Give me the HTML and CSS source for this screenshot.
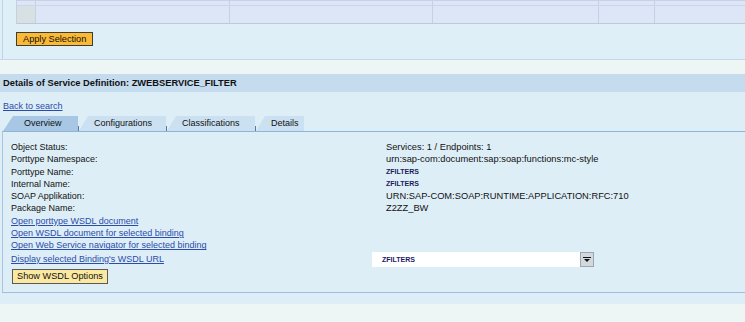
FILE: index.html
```html
<!DOCTYPE html>
<html lang="en">
<head>
    <meta charset="UTF-8">
    <meta name="viewport" content="width=device-width, initial-scale=1.0">
    <title>Details of Service Definition</title>
    <link rel="stylesheet" href="styles.css">
</head>
<body>
    <div id="selection-area">
        <div class="selection-inner">
            <div class="sel-table">
                <div class="sel-line sel-head">
                    <div class="sel-cell c1"></div>
                    <div class="sel-cell c2"></div>
                    <div class="sel-cell c3"></div>
                    <div class="sel-cell c4"></div>
                    <div class="sel-cell c5"></div>
                    <div class="sel-cell c6"></div>
                </div>
                <div class="sel-line sel-row">
                    <div class="sel-cell c1 marker"></div>
                    <div class="sel-cell c2"></div>
                    <div class="sel-cell c3"></div>
                    <div class="sel-cell c4"></div>
                    <div class="sel-cell c5"></div>
                    <div class="sel-cell c6"></div>
                </div>
            </div>
            <button id="apply-button" class="sap-button">Apply Selection</button>
        </div>
    </div>

    <div class="spacer"></div>

    <div id="details-area">
        <div class="details-title">Details of Service Definition: ZWEBSERVICE_FILTER</div>
        <a class="back-link" href="#">Back to search</a>

        <div class="tabs">
            <div class="tab tab-overview selected">Overview</div>
            <div class="tab tab-config">Configurations</div>
            <div class="tab tab-class">Classifications</div>
            <div class="tab tab-details">Details</div>
        </div>

        <div class="tab-panel">
            <div class="props">
                <div class="label">Object Status:</div>
                <div class="value">Services: 1 / Endpoints: 1</div>

                <div class="label">Porttype Namespace:</div>
                <div class="value">urn:sap-com:document:sap:soap:functions:mc-style</div>

                <div class="label">Porttype Name:</div>
                <div class="value small">ZFILTERS</div>

                <div class="label">Internal Name:</div>
                <div class="value small">ZFILTERS</div>

                <div class="label">SOAP Applikation:</div>
                <div class="value">URN:SAP-COM:SOAP:RUNTIME:APPLICATION:RFC:710</div>

                <div class="label">Package Name:</div>
                <div class="value">Z2ZZ_BW</div>

                <div class="label wide"><a href="#">Open porttype WSDL document</a></div>
                <div class="label wide"><a href="#">Open WSDL document for selected binding</a></div>
                <div class="label wide"><a href="#">Open Web Service navigator for selected binding</a></div>

                <div class="label drop-row"><a href="#">Display selected Binding's WSDL URL</a></div>
                <div class="drop-row">
                    <div class="dropdown">
                        <span class="dropdown-text">ZFILTERS</span>
                        <span class="dropdown-button">
                            <svg width="8" height="5" viewBox="0 0 8 5"><rect x="0" y="0" width="8" height="1" fill="#111"/><path d="M1 2 H7 L4 5 Z" fill="#111"/></svg>
                        </span>
                    </div>
                </div>
            </div>
            <button id="wsdl-button" class="sap-button">Show WSDL Options</button>
        </div>
    </div>
</body>
</html>
```

FILE: styles.css
```css
body {
    font-family: "Liberation Sans", Arial, sans-serif;
    font-size: 9px;
    color: #111111;
    background-color: #edf5f5;
    margin: 0;
    padding: 0;
    overflow: hidden;
}

a {
    color: #2a4cab;
    text-decoration: underline;
}

/* top selection block */
#selection-area {
    background-color: #deeff7;
    padding-left: 2px;
    border-bottom: 1px solid #c6d8e8;
}

.selection-inner {
    height: 59px;
    border-left: 1px solid #bcd4e9;
    padding-left: 13px;
    box-sizing: border-box;
}

.sel-table {
    background-color: #dde6f7;
    border-top: 1px solid #c9d1e6;
    border-bottom: 1px solid #bdc9d9;
    border-left: 1px solid #c6cfe0;
}

.sel-line {
    display: flex;
}

.sel-head {
    height: 4px;
    border-bottom: 1px solid #ccd3ea;
}

.sel-row {
    height: 17px;
}

.sel-cell {
    border-right: 1px solid #c8cfe2;
    box-sizing: border-box;
    flex-shrink: 0;
}

.c1 { width: 19px; }
.c2 { width: 194px; }
.c3 { width: 203px; }
.c4 { width: 166px; }
.c5 { width: 56px; }
.c6 { flex: 1; border-right: none; }

.sel-cell.marker {
    background-color: #d7e0e2;
}

.sap-button {
    font-family: "Liberation Sans", Arial, sans-serif;
    font-size: 9.2px;
    color: #111111;
    border: 1px solid #3c3c3c;
    border-radius: 0;
    padding: 0 6px;
    height: 14px;
    line-height: 12px;
    cursor: pointer;
    display: block;
}

#apply-button {
    margin-top: 8px;
    background-color: #fbb934;
}

.spacer {
    height: 14px;
}

/* details block */
#details-area {
    background-color: #deeef7;
    padding-bottom: 11px;
}

.details-title {
    background-color: #c5dbee;
    height: 18px;
    line-height: 18px;
    padding-left: 3px;
    font-size: 9.3px;
    font-weight: bold;
    color: #111111;
}

.back-link {
    display: inline-block;
    margin: 8px 0 0 3px;
    line-height: 12px;
}

.tabs {
    display: flex;
    margin-top: 4px;
    padding-left: 3px;
    height: 15px;
}

.tab {
    position: relative;
    isolation: isolate;
    height: 15px;
    line-height: 15px;
    padding-left: 16px;
    box-sizing: border-box;
    color: #111111;
    cursor: pointer;
}

.tab::before {
    content: "";
    position: absolute;
    top: 0;
    left: 0;
    right: 0;
    bottom: 0;
    z-index: -1;
    background-color: #cbe0f1;
    clip-path: polygon(1px 100%, 10px 0, 100% 0, 100% 100%);
}

.tab::after {
    content: "";
    position: absolute;
    left: 0;
    bottom: 0;
    width: 1px;
    height: 5px;
    background-color: #5c7a98;
}

.tab.selected::before {
    background-color: #a7c7e4;
    clip-path: polygon(0 100%, 10px 0, 100% 0, 100% 100%);
}

.tab.selected::after {
    display: none;
}

.tab-overview { width: 75px; padding-left: 21px; }
.tab-config { width: 88px; }
.tab-class { width: 89px; }
.tab-details { width: 49px; }

.tab-panel {
    margin-left: 2px;
    border-top: 1px solid #8fb4da;
    border-left: 1px solid #a9c5df;
    border-bottom: 1px solid #9dbedc;
    padding: 9px 0 8px 8px;
}

.props {
    display: grid;
    grid-template-columns: 361px 1fr;
    grid-template-rows: repeat(9, 12.3px) 15px;
    line-height: 12px;
}

.label {
    white-space: nowrap;
}

.label.wide {
    grid-column: 1 / 3;
}

.value {
    padding-left: 14px;
    white-space: nowrap;
    font-size: 9.3px;
}

.value.small {
    font-size: 7px;
    font-weight: bold;
    color: #1c1c5e;
    line-height: 12px;
}

.drop-row {
    height: 15px;
    line-height: 14px;
}

.dropdown {
    display: flex;
    width: 222px;
    height: 15px;
    background-color: #ffffff;
    box-sizing: border-box;
}

.dropdown-text {
    flex: 1;
    padding-left: 10px;
    font-size: 7px;
    font-weight: bold;
    color: #1c1c5e;
    line-height: 15px;
}

.dropdown-button {
    width: 14px;
    height: 15px;
    box-sizing: border-box;
    border: 1px solid #9aa6b2;
    background-color: #d3d8dd;
    display: flex;
    align-items: center;
    justify-content: center;
}

#wsdl-button {
    margin: 2px 0 0 1px;
    height: 15px;
    line-height: 13px;
    padding: 0 4px;
    background-color: #fbe9a2;
    border-color: #5a5a5a;
}
```
